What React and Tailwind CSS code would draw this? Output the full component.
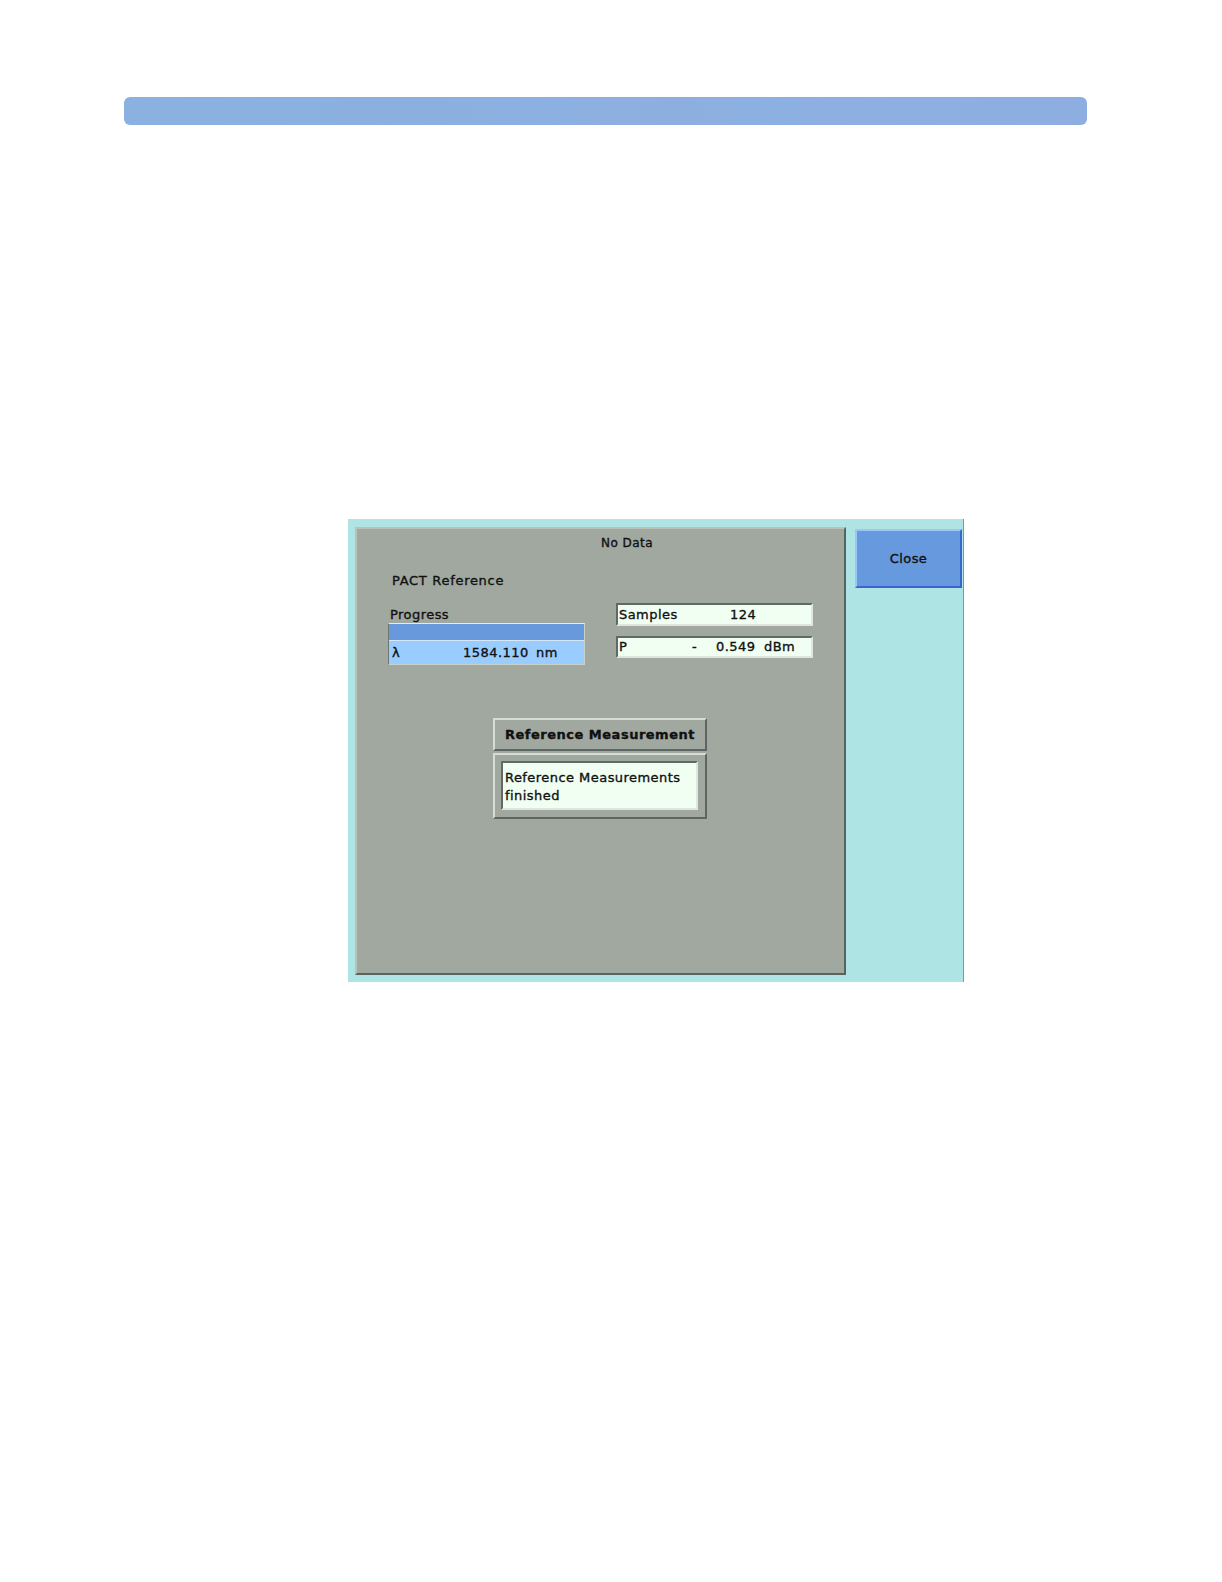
import React from "react";

const font = {
  fontFamily: '"DejaVu Sans", "Liberation Sans", sans-serif',
};

function InsetField({ className = "", children }) {
  return (
    <div
      className={
        "flex items-center border-2 border-t-[#5f6a66] border-l-[#5f6a66] border-r-[#dfe6df] border-b-[#dfe6df] bg-[#f0fff2] pl-[1px] " +
        className
      }
    >
      {children}
    </div>
  );
}

function ReferencePanel() {
  return (
    <div className="ml-[136px] mt-[53px] w-[214px]">
      <div className="flex h-[33px] items-center justify-center border-2 border-t-[#d6ddd6] border-l-[#d6ddd6] border-r-[#5c6763] border-b-[#5c6763] bg-[#a1a8a0] text-[13px] font-bold tracking-[0.5px]">
        Reference Measurement
      </div>
      <div className="mt-[2px] h-[66px] border-2 border-t-[#d6ddd6] border-l-[#d6ddd6] border-r-[#5c6763] border-b-[#5c6763] bg-[#a1a8a0] pt-[6px] pl-[6px] pr-[7px]">
        <div className="h-[49px] border-2 border-t-[#5f6a66] border-l-[#5f6a66] border-r-[#dfe6df] border-b-[#dfe6df] bg-[#f0fff2] pl-[2px] pt-[6px] text-[13px] leading-[18px]">
          <div>Reference Measurements</div>
          <div>finished</div>
        </div>
      </div>
    </div>
  );
}

export default function App() {
  return (
    <div
      className="min-h-[1582px] w-[1222px] bg-white text-[#111] tracking-[0.45px] [-webkit-text-stroke:0.35px_#111]"
      style={font}
    >
      {/* top banner */}
      <div className="pt-[97px]">
        <div className="ml-[124px] h-[28px] w-[963px] rounded-[6px] bg-gradient-to-r from-[#8ab1df] to-[#8eaee2]" />
      </div>

      {/* instrument screen */}
      <div className="ml-[348px] mt-[394px] flex h-[463px] w-[616px] items-start border-r border-r-[#8a9494] bg-[#afe4e4] pl-[7px] pt-[8px]">
        <div className="h-[448px] w-[491px] border-2 border-t-[#b9c1b9] border-l-[#b9c1b9] border-r-[#56635f] border-b-[#56635f] bg-[#a1a8a0]">
          <div className="mt-[7px] h-[14px] pl-[244px] text-[12px] leading-[14px]">
            No Data
          </div>
          <div className="ml-[35px] mt-[23px] h-[16px] text-[13px] leading-[16px] tracking-[0.7px]">
            PACT Reference
          </div>

          <div className="ml-[31px] mt-[14px] flex items-start gap-[31px]">
            <div className="w-[197px]">
              <div className="mt-[4px] h-[16px] pl-[2px] text-[13px] leading-[16px]">
                Progress
              </div>
              <div className="h-[42px] border border-t-[#e4ece4] border-l-[#6c7670] border-r-[#c9d1c9] border-b-[#c9d1c9]">
                <div className="h-[17px] border-b border-b-[#d8e8f8] bg-[#6799dc]" />
                <div className="flex h-[23px] items-center bg-[#99ccff] pl-[3px] text-[13px]">
                  <span className="w-[71px]">λ</span>
                  <span className="w-[73px]">1584.110</span>
                  <span>nm</span>
                </div>
              </div>
            </div>

            <div className="w-[197px]">
              <InsetField className="h-[23px] text-[13px]">
                <span className="w-[111px]">Samples</span>
                <span>124</span>
              </InsetField>
              <InsetField className="mt-[10px] h-[22px] text-[13px]">
                <span className="w-[73px]">P</span>
                <span className="w-[24px]">-</span>
                <span className="w-[48px]">0.549</span>
                <span>dBm</span>
              </InsetField>
            </div>
          </div>

          <ReferencePanel />
        </div>

        <button
          type="button"
          className="ml-[9px] mt-[2px] flex h-[59px] w-[107px] items-center justify-center border-2 border-t-[#9cc6f6] border-l-[#9cc6f6] border-r-[#3f63cc] border-b-[#3f63cc] bg-[#6699dd] text-[13px]"
        >
          Close
        </button>
      </div>
    </div>
  );
}
